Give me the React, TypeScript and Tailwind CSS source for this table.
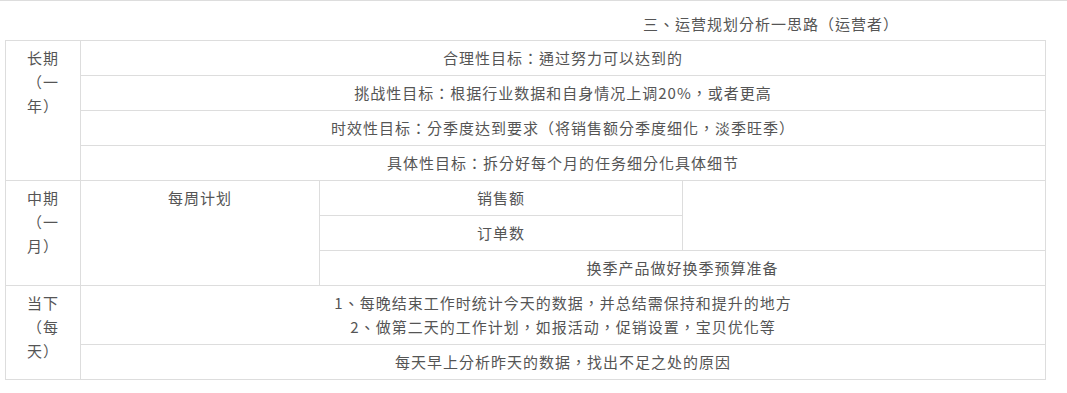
const cell = "border border-[#dddddd] px-[6px] py-[5px] text-center align-middle";
const side = "border border-[#dddddd] px-[6px] py-[5px] text-center align-top";

function Side({ lines, span }: { lines: string[]; span: number }) {
  return (
    <td className={side} rowSpan={span}>
      {lines.map((l) => (
        <div key={l}>{l}</div>
      ))}
    </td>
  );
}

export default function App() {
  return (
    <div
      className="w-[1067px] h-[393px] bg-white border-t border-[#dddddd] text-[15px] leading-[24px] tracking-[1px] text-[#555555] [text-spacing-trim:space-all]"
      style={{ fontFamily: '"Microsoft YaHei", "Noto Sans CJK TC", "Noto Sans CJK SC", "Noto Sans", sans-serif' }}
    >
      <div className="h-[39px] pt-[11px] pl-[643px]">三、运营规划分析一思路（运营者）</div>
      <table className="ml-[5px] w-[1040px] table-fixed border-collapse">
        <colgroup>
          <col className="w-[75px]" />
          <col className="w-[239px]" />
          <col className="w-[363px]" />
          <col className="w-[363px]" />
        </colgroup>
        <tbody>
          <tr>
            <Side lines={["长期", "（一", "年）"]} span={4} />
            <td className={cell} colSpan={3}>合理性目标：通过努力可以达到的</td>
          </tr>
          <tr>
            <td className={cell} colSpan={3}>挑战性目标：根据行业数据和自身情况上调20%，或者更高</td>
          </tr>
          <tr>
            <td className={cell} colSpan={3}>时效性目标：分季度达到要求（将销售额分季度细化，淡季旺季）</td>
          </tr>
          <tr>
            <td className={cell} colSpan={3}>具体性目标：拆分好每个月的任务细分化具体细节</td>
          </tr>
          <tr>
            <Side lines={["中期", "（一", "月）"]} span={3} />
            <td className={side} rowSpan={3}>每周计划</td>
            <td className={cell}>销售额</td>
            <td className={cell} rowSpan={2}></td>
          </tr>
          <tr>
            <td className={cell}>订单数</td>
          </tr>
          <tr>
            <td className={cell} colSpan={2}>换季产品做好换季预算准备</td>
          </tr>
          <tr>
            <Side lines={["当下", "（每", "天）"]} span={2} />
            <td className={cell} colSpan={3}>
              <div>1、每晚结束工作时统计今天的数据，并总结需保持和提升的地方</div>
              <div>2、做第二天的工作计划，如报活动，促销设置，宝贝优化等</div>
            </td>
          </tr>
          <tr>
            <td className={cell} colSpan={3}>每天早上分析昨天的数据，找出不足之处的原因</td>
          </tr>
        </tbody>
      </table>
    </div>
  );
}
